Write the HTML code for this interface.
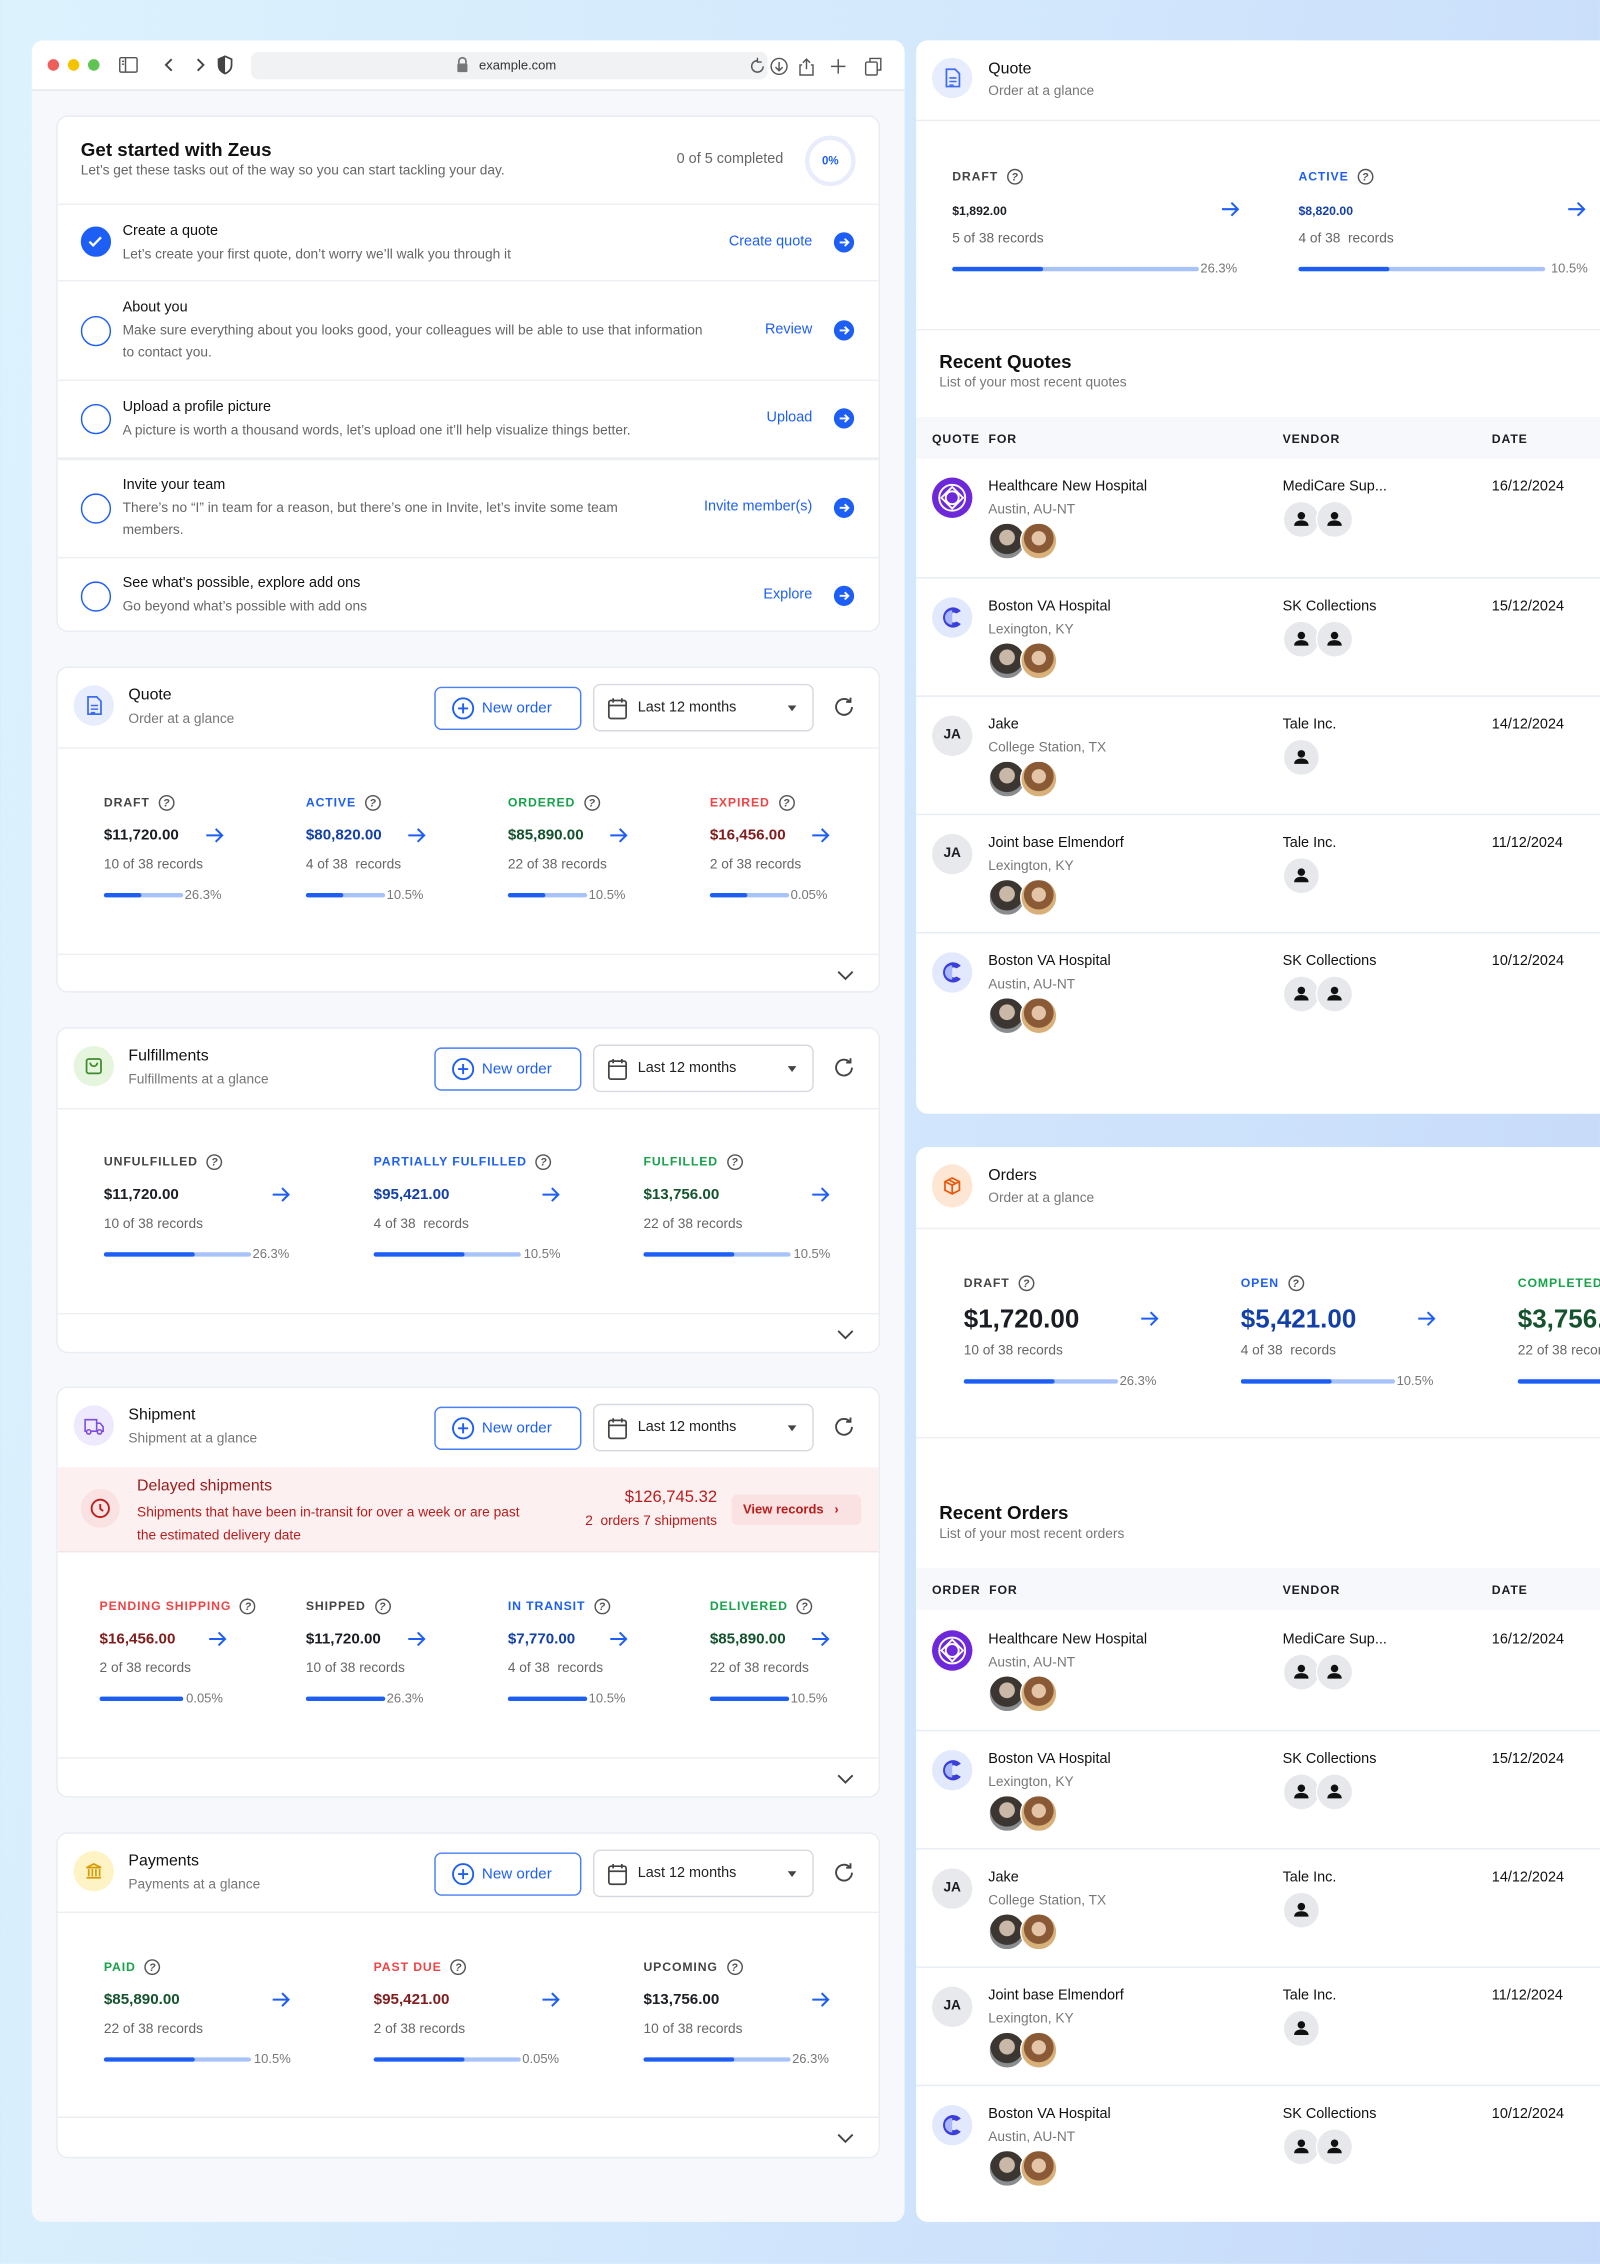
<!DOCTYPE html>
<html><head><meta charset="utf-8">
<style>
*{box-sizing:border-box;margin:0;padding:0}
html,body{width:1600px;height:2263px;overflow:hidden}
body{font-family:"Liberation Sans",sans-serif;color:#1a1d24;background:linear-gradient(100deg,#dcf2fd 0%,#d3e8fc 50%,#c5d9fa 100%)}
#c{position:absolute;left:0;top:0;width:1109px;height:1569px;transform:scale(1.44274);transform-origin:0 0}
.a{position:absolute}
.win{position:absolute;left:22px;top:28px;width:605px;height:1512px;background:#f6f8fb;border-radius:8px;overflow:hidden}
.bar{position:absolute;left:0;top:0;width:605px;height:35px;background:#fff;border-bottom:1px solid #e3e5ea}
.card{position:absolute;left:39px;width:571px;background:#fff;border:1px solid #e8ecf3;border-radius:8px}
.t{font-size:13px;font-weight:700;color:#111}
.s{font-size:9.5px;color:#666}
.line{position:absolute;left:0;right:0;height:1px;background:#eceef2}
.row .h{position:absolute;left:45px;font-size:10px;color:#111}
.row .d{position:absolute;left:45px;font-size:9.5px;color:#666;line-height:15px}
.chk{position:absolute;left:16px;width:21px;height:21px;border:1.6px solid #1d5ff5;border-radius:50%}
.lnk{position:absolute;right:46px;font-size:10px;color:#1d5ff5}
.go{position:absolute;right:17px;width:14px;height:14px;border-radius:50%;background:#1d5ff5}
.ic{position:absolute;left:11px;top:12px;width:28px;height:28px;border-radius:50%}
.ct{position:absolute;left:49px;top:13px;font-size:11px;color:#111}
.cs{position:absolute;left:49px;top:30px;font-size:9.5px;color:#777}
.nb{position:absolute;left:261px;top:13px;width:102px;height:30px;border:1px solid #4a7ef7;border-radius:5px;color:#1d5ff5;font-size:10.5px;line-height:28px;padding-left:32px}
.dd{position:absolute;left:371px;top:11px;width:153px;height:33px;border:1px solid #d6d9df;border-radius:5px;font-size:10px;line-height:31px;padding-left:30px;color:#222}
.st{position:absolute}
.st>*{position:absolute;white-space:nowrap}
.lab{top:0;font-size:8.5px;line-height:11px;letter-spacing:.6px;font-weight:700}
.q{display:inline-block;width:11px;height:11px;border:1.2px solid #555;border-radius:50%;font-size:7.5px;line-height:9px;text-align:center;color:#555;margin-left:6px;vertical-align:top;font-weight:700;letter-spacing:0}
.val{top:22px;font-size:10.5px;font-weight:700;line-height:12px}
.rec{top:43px;font-size:9.5px;color:#666;line-height:12px}
.pb{top:68px;height:3px;background:#a8c3fa;border-radius:2px}
.pb i{display:block;height:3px;background:#1d5ff5;border-radius:2px}
.pct{top:63px;font-size:9px;color:#777;line-height:12px}
.arr{top:22px}
.panel{position:absolute;left:635px;width:480px;background:#fff;border-radius:8px 0 0 8px}
.th{position:absolute;left:0;right:0;height:29px;background:#f6f8fb;font-size:8.5px;font-weight:700;letter-spacing:.6px}
.th span{position:absolute;top:10px}
.tr{position:absolute;left:0;right:0;height:82px;border-top:1px solid #e6ecf5}
.tr>*{position:absolute}
.lg{left:11px;top:13px;width:28px;height:28px;border-radius:50%}
.nm{left:50px;top:14px;font-size:10px;color:#111}
.lc{left:50px;top:30px;font-size:9.5px;color:#777}
.ph{top:44px;width:26px;height:26px;border-radius:50%;border:1.5px solid #fff}
.vn{left:254px;top:14px;font-size:10px;color:#111}
.dt{left:399px;top:14px;font-size:10px;color:#111}
.va{top:29px;width:26px;height:26px;border-radius:50%;background:#e6e8ec;border:1px solid #fff}
</style></head><body><div id="c">

<div class="win">
 <div class="bar">
  <div class="a" style="left:11px;top:13px;width:8px;height:8px;border-radius:50%;background:#ee5f5b"></div>
  <div class="a" style="left:25px;top:13px;width:8px;height:8px;border-radius:50%;background:#f5c400"></div>
  <div class="a" style="left:39px;top:13px;width:8px;height:8px;border-radius:50%;background:#5fc454"></div>
  <svg class="a" style="left:60px;top:10px" width="14" height="14" viewBox="0 0 14 14" fill="none" stroke="#555" stroke-width="1"><rect x="1" y="2" width="12" height="10" rx="1"/><path d="M5 2v10M2.5 4.5h1.5M2.5 6.5h1.5"/></svg>
  <svg class="a" style="left:90px;top:11px" width="40" height="12" viewBox="0 0 40 12" fill="none" stroke="#444" stroke-width="1.3"><path d="M7 2L3 6l4 4M25 2l4 4-4 4"/></svg>
  <svg class="a" style="left:128px;top:10px" width="12" height="14" viewBox="0 0 12 14"><path d="M6 1L1.5 3v4c0 3 2 5 4.5 6 2.5-1 4.5-3 4.5-6V3z" fill="none" stroke="#444" stroke-width="1.2"/><path d="M6 1v12c-2.5-1-4.5-3-4.5-6V3z" fill="#444"/></svg>
  <div class="a" style="left:152px;top:8px;width:358px;height:19px;background:#f1f2f4;border-radius:5px"></div>
  <svg class="a" style="left:294px;top:11px" width="9" height="12" viewBox="0 0 9 12"><path d="M2 5V3.5a2.5 2.5 0 015 0V5" fill="none" stroke="#777" stroke-width="1.2"/><rect x="1" y="5" width="7" height="6" rx="1" fill="#777"/></svg>
  <div class="a" style="left:310px;top:12px;font-size:9px;color:#333">example.com</div>
  <svg class="a" style="left:497px;top:11px" width="100" height="14" viewBox="0 0 100 14" fill="none" stroke="#555" stroke-width="1"><path d="M6 3a4 4 0 104 4M6 1v3h3"/><circle cx="21" cy="7" r="5.5"/><path d="M21 4v6M18.5 7.5L21 10l2.5-2.5"/><path d="M40 2v7M37.5 4.5L40 2l2.5 2.5M37 6h-1.5v7h9V6H43"/><path d="M62 2v10M57 7h10"/><rect x="81" y="4" width="8" height="9" rx="1"/><path d="M84 4V1.5h7.5v8H89"/></svg>
 </div>
</div>

<!-- Get started -->
<div class="card" style="top:80px;height:358px">
 <div class="a t" style="left:16px;top:15px">Get started with Zeus</div>
 <div class="a s" style="left:16px;top:32px">Let’s get these tasks out of the way so you can start tackling your day.</div>
 <div class="a s" style="left:429px;top:24px;font-size:10px">0 of 5 completed</div>
 <div class="a" style="left:518px;top:13px;width:35px;height:35px;border-radius:50%;border:3px solid #e9edfb;font-size:8px;color:#1d5ff5;text-align:center;line-height:29px;font-weight:700">0%</div>
 <div class="line" style="top:60px"></div>
 <div class="row">
  <div class="chk" style="top:76px;background:#1d5ff5"><svg width="18" height="18" viewBox="0 0 18 18" style="position:absolute;left:0;top:0"><path d="M5 9.5l2.6 2.6L13 6.5" fill="none" stroke="#fff" stroke-width="1.6"/></svg></div>
  <div class="h" style="top:74px">Create a quote</div><div class="d" style="top:88px">Let’s create your first quote, don’t worry we’ll walk you through it</div>
  <div class="lnk" style="top:81px">Create quote</div><div class="go" style="top:80px"><svg width="14" height="14" viewBox="0 0 14 14"><path d="M4 7h6M7.5 4.5L10 7l-2.5 2.5" fill="none" stroke="#fff" stroke-width="1.3"/></svg></div>
 </div>
 <div class="line" style="top:113px"></div>
 <div class="row">
  <div class="chk" style="top:138px"></div>
  <div class="h" style="top:127px">About you</div><div class="d" style="top:141px">Make sure everything about you looks good, your colleagues will be able to use that information<br>to contact you.</div>
  <div class="lnk" style="top:142px">Review</div><div class="go" style="top:141px"><svg width="14" height="14" viewBox="0 0 14 14"><path d="M4 7h6M7.5 4.5L10 7l-2.5 2.5" fill="none" stroke="#fff" stroke-width="1.3"/></svg></div>
 </div>
 <div class="line" style="top:182px"></div>
 <div class="row">
  <div class="chk" style="top:199px"></div>
  <div class="h" style="top:196px">Upload a profile picture</div><div class="d" style="top:210px">A picture is worth a thousand words, let’s upload one it’ll help visualize things better.</div>
  <div class="lnk" style="top:203px">Upload</div><div class="go" style="top:202px"><svg width="14" height="14" viewBox="0 0 14 14"><path d="M4 7h6M7.5 4.5L10 7l-2.5 2.5" fill="none" stroke="#fff" stroke-width="1.3"/></svg></div>
 </div>
 <div class="line" style="top:236px;height:2px"></div>
 <div class="row">
  <div class="chk" style="top:261px"></div>
  <div class="h" style="top:250px">Invite your team</div><div class="d" style="top:264px">There’s no “I” in team for a reason, but there’s one in Invite, let’s invite some team<br>members.</div>
  <div class="lnk" style="top:265px">Invite member(s)</div><div class="go" style="top:264px"><svg width="14" height="14" viewBox="0 0 14 14"><path d="M4 7h6M7.5 4.5L10 7l-2.5 2.5" fill="none" stroke="#fff" stroke-width="1.3"/></svg></div>
 </div>
 <div class="line" style="top:305px"></div>
 <div class="row">
  <div class="chk" style="top:322px"></div>
  <div class="h" style="top:318px">See what's possible, explore add ons</div><div class="d" style="top:332px">Go beyond what’s possible with add ons</div>
  <div class="lnk" style="top:326px">Explore</div><div class="go" style="top:325px"><svg width="14" height="14" viewBox="0 0 14 14"><path d="M4 7h6M7.5 4.5L10 7l-2.5 2.5" fill="none" stroke="#fff" stroke-width="1.3"/></svg></div>
 </div>
</div>

<svg width="0" height="0" style="position:absolute"><defs>
<symbol id="ar" viewBox="0 0 14 12"><path d="M1 6h11M7.5 1.5L12 6l-4.5 4.5" fill="none" stroke="#1d5ff5" stroke-width="1.4"/></symbol>
<symbol id="plus" viewBox="0 0 16 16"><circle cx="8" cy="8" r="7" fill="none" stroke="#1d5ff5" stroke-width="1.3"/><path d="M8 4.5v7M4.5 8h7" stroke="#1d5ff5" stroke-width="1.3"/></symbol>
<symbol id="cal" viewBox="0 0 14 16"><rect x="1" y="2.5" width="12" height="12.5" rx="1.5" fill="none" stroke="#444" stroke-width="1.2"/><path d="M1 6h12M4 1v3M10 1v3" stroke="#444" stroke-width="1.2"/></symbol>
<symbol id="ref" viewBox="0 0 16 16"><path d="M13.5 8a5.5 5.5 0 11-1.6-3.9M12.5 1.5v3h-3" fill="none" stroke="#444" stroke-width="1.3"/></symbol>
<symbol id="chev" viewBox="0 0 12 8"><path d="M1 1.5l5 5 5-5" fill="none" stroke="#444" stroke-width="1.3"/></symbol>
</defs></svg>

<!-- Quote card -->
<div class="card" style="top:462px;height:226px">
 <div class="ic" style="background:#e8edfd"><svg width="28" height="28" viewBox="0 0 28 28"><path d="M10 8h6l3 3v9H10z" fill="none" stroke="#3d6cf0" stroke-width="1.2"/><path d="M12 14h5M12 16.5h5M12 19h3" stroke="#3d6cf0" stroke-width="1.1"/></svg></div>
 <div class="ct">Quote</div><div class="cs">Order at a glance</div>
 <div class="nb"><svg class="a" style="left:11px;top:6px" width="16" height="16"><use href="#plus"/></svg>New order</div>
 <div class="dd"><svg class="a" style="left:9px;top:8px" width="14" height="16"><use href="#cal"/></svg>Last 12 months<span class="a" style="right:11px;top:14px;border:3.5px solid transparent;border-top:4px solid #444"></span></div>
 <svg class="a" style="left:537px;top:19px" width="16" height="16"><use href="#ref"/></svg>
 <div class="line" style="top:55px"></div>
 <div class="line" style="top:198px"></div>
 <svg class="a" style="left:540px;top:209px" width="12" height="8"><use href="#chev"/></svg>
</div>
<div class="st" style="left:72px;top:551px"><div class="lab" style="color:#444">DRAFT<i class="q">?</i></div><div class="val">$11,720.00</div><svg class="arr" style="left:70px" width="14" height="12"><use href="#ar"/></svg><div class="rec">10 of 38 records</div><div class="pb" style="width:55px"><i style="width:26px"></i></div><div class="pct" style="left:56px">26.3%</div></div>
<div class="st" style="left:212px;top:551px"><div class="lab" style="color:#1d5ff5">ACTIVE<i class="q">?</i></div><div class="val" style="color:#123fa8">$80,820.00</div><svg class="arr" style="left:70px" width="14" height="12"><use href="#ar"/></svg><div class="rec">4 of 38&nbsp; records</div><div class="pb" style="width:55px"><i style="width:26px"></i></div><div class="pct" style="left:56px">10.5%</div></div>
<div class="st" style="left:352px;top:551px"><div class="lab" style="color:#16a34a">ORDERED<i class="q">?</i></div><div class="val" style="color:#14532d">$85,890.00</div><svg class="arr" style="left:70px" width="14" height="12"><use href="#ar"/></svg><div class="rec">22 of 38 records</div><div class="pb" style="width:55px"><i style="width:26px"></i></div><div class="pct" style="left:56px">10.5%</div></div>
<div class="st" style="left:492px;top:551px"><div class="lab" style="color:#ef4444">EXPIRED<i class="q">?</i></div><div class="val" style="color:#7f1d1d">$16,456.00</div><svg class="arr" style="left:70px" width="14" height="12"><use href="#ar"/></svg><div class="rec">2 of 38 records</div><div class="pb" style="width:55px"><i style="width:26px"></i></div><div class="pct" style="left:56px">0.05%</div></div>

<!-- Fulfillments -->
<div class="card" style="top:712px;height:226px">
 <div class="ic" style="background:#e6f5de"><svg width="28" height="28" viewBox="0 0 28 28"><rect x="9" y="9" width="10" height="10" rx="1.5" fill="none" stroke="#3f8a2a" stroke-width="1.2"/><path d="M11.5 11.5a2.5 2.5 0 005 0" fill="none" stroke="#3f8a2a" stroke-width="1.2"/></svg></div>
 <div class="ct">Fulfillments</div><div class="cs">Fulfillments at a glance</div>
 <div class="nb"><svg class="a" style="left:11px;top:6px" width="16" height="16"><use href="#plus"/></svg>New order</div>
 <div class="dd"><svg class="a" style="left:9px;top:8px" width="14" height="16"><use href="#cal"/></svg>Last 12 months<span class="a" style="right:11px;top:14px;border:3.5px solid transparent;border-top:4px solid #444"></span></div>
 <svg class="a" style="left:537px;top:19px" width="16" height="16"><use href="#ref"/></svg>
 <div class="line" style="top:55px"></div>
 <div class="line" style="top:197px"></div>
 <svg class="a" style="left:540px;top:208px" width="12" height="8"><use href="#chev"/></svg>
</div>
<div class="st" style="left:72px;top:800px"><div class="lab" style="color:#444">UNFULFILLED<i class="q">?</i></div><div class="val">$11,720.00</div><svg class="arr" style="left:116px" width="14" height="12"><use href="#ar"/></svg><div class="rec">10 of 38 records</div><div class="pb" style="width:102px"><i style="width:63px"></i></div><div class="pct" style="left:103px">26.3%</div></div>
<div class="st" style="left:259px;top:800px"><div class="lab" style="color:#1d5ff5">PARTIALLY FULFILLED<i class="q">?</i></div><div class="val" style="color:#123fa8">$95,421.00</div><svg class="arr" style="left:116px" width="14" height="12"><use href="#ar"/></svg><div class="rec">4 of 38&nbsp; records</div><div class="pb" style="width:102px"><i style="width:63px"></i></div><div class="pct" style="left:104px">10.5%</div></div>
<div class="st" style="left:446px;top:800px"><div class="lab" style="color:#16a34a">FULFILLED<i class="q">?</i></div><div class="val" style="color:#14532d">$13,756.00</div><svg class="arr" style="left:116px" width="14" height="12"><use href="#ar"/></svg><div class="rec">22 of 38 records</div><div class="pb" style="width:102px"><i style="width:63px"></i></div><div class="pct" style="left:104px">10.5%</div></div>

<!-- Shipment -->
<div class="card" style="top:961px;height:285px">
 <div class="ic" style="background:#efe9fd"><svg width="28" height="28" viewBox="0 0 28 28" fill="none" stroke="#7c4de0" stroke-width="1.1"><path d="M8 10h8v8H8zM16 12.5h2.5l2 2.5v3H16"/><circle cx="10.5" cy="18.5" r="1.5" fill="#efe9fd"/><circle cx="18" cy="18.5" r="1.5" fill="#efe9fd"/></svg></div>
 <div class="ct">Shipment</div><div class="cs">Shipment at a glance</div>
 <div class="nb"><svg class="a" style="left:11px;top:6px" width="16" height="16"><use href="#plus"/></svg>New order</div>
 <div class="dd"><svg class="a" style="left:9px;top:8px" width="14" height="16"><use href="#cal"/></svg>Last 12 months<span class="a" style="right:11px;top:14px;border:3.5px solid transparent;border-top:4px solid #444"></span></div>
 <svg class="a" style="left:537px;top:19px" width="16" height="16"><use href="#ref"/></svg>
 <div class="a" style="left:0;right:0;top:55px;height:59px;background:#fdf0f0;border-bottom:1px solid #f4e4e4"></div>
 <div class="a" style="left:16px;top:70px;width:27px;height:27px;border-radius:50%;background:#fbe2e2"><svg width="27" height="27" viewBox="0 0 27 27"><circle cx="13.5" cy="13.5" r="6" fill="none" stroke="#b91c1c" stroke-width="1.3"/><path d="M13.5 10.5v3.3l2 1.5" fill="none" stroke="#b91c1c" stroke-width="1.3"/></svg></div>
 <div class="a" style="left:55px;top:62px;font-size:11px;color:#991b1b">Delayed shipments</div>
 <div class="a" style="left:55px;top:79px;font-size:9.5px;color:#b91c1c;line-height:16px">Shipments that have been in-transit for over a week or are past<br>the estimated delivery date</div>
 <div class="a" style="right:112px;top:70px;font-size:11.5px;color:#b91c1c">$126,745.32</div>
 <div class="a" style="right:112px;top:87px;font-size:9.5px;color:#b91c1c">2&nbsp; orders 7 shipments</div>
 <div class="a" style="left:467px;top:74px;width:90px;height:21px;background:#fbe2e2;border-radius:4px;font-size:9px;color:#b91c1c;font-weight:700;line-height:21px;padding-left:8px">View records&nbsp;&nbsp; ›</div>
 <div class="line" style="top:256px"></div>
 <svg class="a" style="left:540px;top:267px" width="12" height="8"><use href="#chev"/></svg>
</div>
<div class="st" style="left:69px;top:1108px"><div class="lab" style="color:#ef4444">PENDING SHIPPING<i class="q">?</i></div><div class="val" style="color:#7f1d1d">$16,456.00</div><svg class="arr" style="left:75px" width="14" height="12"><use href="#ar"/></svg><div class="rec">2 of 38 records</div><div class="pb" style="width:58px"><i style="width:58px"></i></div><div class="pct" style="left:60px">0.05%</div></div>
<div class="st" style="left:212px;top:1108px"><div class="lab" style="color:#444">SHIPPED<i class="q">?</i></div><div class="val">$11,720.00</div><svg class="arr" style="left:70px" width="14" height="12"><use href="#ar"/></svg><div class="rec">10 of 38 records</div><div class="pb" style="width:55px"><i style="width:55px"></i></div><div class="pct" style="left:56px">26.3%</div></div>
<div class="st" style="left:352px;top:1108px"><div class="lab" style="color:#1d5ff5">IN TRANSIT<i class="q">?</i></div><div class="val" style="color:#123fa8">$7,770.00</div><svg class="arr" style="left:70px" width="14" height="12"><use href="#ar"/></svg><div class="rec">4 of 38&nbsp; records</div><div class="pb" style="width:55px"><i style="width:55px"></i></div><div class="pct" style="left:56px">10.5%</div></div>
<div class="st" style="left:492px;top:1108px"><div class="lab" style="color:#16a34a">DELIVERED<i class="q">?</i></div><div class="val" style="color:#14532d">$85,890.00</div><svg class="arr" style="left:70px" width="14" height="12"><use href="#ar"/></svg><div class="rec">22 of 38 records</div><div class="pb" style="width:55px"><i style="width:55px"></i></div><div class="pct" style="left:56px">10.5%</div></div>

<!-- Payments -->
<div class="card" style="top:1270px;height:226px">
 <div class="ic" style="background:#fdf3c4"><svg width="28" height="28" viewBox="0 0 28 28" fill="none" stroke="#d99a00" stroke-width="1.2"><path d="M9 11.5L14 9l5 2.5zM10.5 12.5v5M13 12.5v5M15.5 12.5v5M18 12.5v5M9 18.5h10"/></svg></div>
 <div class="ct">Payments</div><div class="cs">Payments at a glance</div>
 <div class="nb"><svg class="a" style="left:11px;top:6px" width="16" height="16"><use href="#plus"/></svg>New order</div>
 <div class="dd"><svg class="a" style="left:9px;top:8px" width="14" height="16"><use href="#cal"/></svg>Last 12 months<span class="a" style="right:11px;top:14px;border:3.5px solid transparent;border-top:4px solid #444"></span></div>
 <svg class="a" style="left:537px;top:19px" width="16" height="16"><use href="#ref"/></svg>
 <div class="line" style="top:54px"></div>
 <div class="line" style="top:196px"></div>
 <svg class="a" style="left:540px;top:207px" width="12" height="8"><use href="#chev"/></svg>
</div>
<div class="st" style="left:72px;top:1358px"><div class="lab" style="color:#16a34a">PAID<i class="q">?</i></div><div class="val" style="color:#14532d">$85,890.00</div><svg class="arr" style="left:116px" width="14" height="12"><use href="#ar"/></svg><div class="rec">22 of 38 records</div><div class="pb" style="width:102px"><i style="width:63px"></i></div><div class="pct" style="left:104px">10.5%</div></div>
<div class="st" style="left:259px;top:1358px"><div class="lab" style="color:#ef4444">PAST DUE<i class="q">?</i></div><div class="val" style="color:#7f1d1d">$95,421.00</div><svg class="arr" style="left:116px" width="14" height="12"><use href="#ar"/></svg><div class="rec">2 of 38 records</div><div class="pb" style="width:102px"><i style="width:63px"></i></div><div class="pct" style="left:103px">0.05%</div></div>
<div class="st" style="left:446px;top:1358px"><div class="lab" style="color:#444">UPCOMING<i class="q">?</i></div><div class="val">$13,756.00</div><svg class="arr" style="left:116px" width="14" height="12"><use href="#ar"/></svg><div class="rec">10 of 38 records</div><div class="pb" style="width:102px"><i style="width:63px"></i></div><div class="pct" style="left:103px">26.3%</div></div>

<!-- Right quote panel -->
<div class="panel" style="top:28px;height:744px">
 <div class="a" style="left:11px;top:12px;width:28px;height:28px;border-radius:50%;background:#e8edfd"><svg width="28" height="28" viewBox="0 0 28 28"><path d="M10 8h6l3 3v9H10z" fill="none" stroke="#3d6cf0" stroke-width="1.2"/><path d="M12 14h5M12 16.5h5M12 19h3" stroke="#3d6cf0" stroke-width="1.1"/></svg></div>
 <div class="a" style="left:50px;top:14px;font-size:11px;color:#111">Quote</div>
 <div class="a" style="left:50px;top:30px;font-size:9.5px;color:#777">Order at a glance</div>
 <div class="line" style="top:55px"></div>
 <div class="line" style="top:200px"></div>
 <div class="a" style="left:16px;top:215px;font-size:13px;font-weight:700;color:#111">Recent Quotes</div>
 <div class="a" style="left:16px;top:232px;font-size:9.5px;color:#777">List of your most recent quotes</div>
 <div class="th" style="top:261px"><span style="left:11px">QUOTE&nbsp; FOR</span><span style="left:254px">VENDOR</span><span style="left:399px">DATE</span></div>
</div>
<div class="st" style="left:660px;top:117px"><div class="lab" style="color:#444">DRAFT<i class="q">?</i></div><div class="val" style="font-size:8.5px;top:23px">$1,892.00</div><svg class="arr" style="left:186px" width="14" height="12"><use href="#ar"/></svg><div class="rec">5 of 38 records</div><div class="pb" style="width:171px"><i style="width:63px"></i></div><div class="pct" style="left:172px">26.3%</div></div>
<div class="st" style="left:900px;top:117px"><div class="lab" style="color:#1d5ff5">ACTIVE<i class="q">?</i></div><div class="val" style="font-size:8.5px;top:23px;color:#123fa8">$8,820.00</div><svg class="arr" style="left:186px" width="14" height="12"><use href="#ar"/></svg><div class="rec">4 of 38&nbsp; records</div><div class="pb" style="width:171px"><i style="width:63px"></i></div><div class="pct" style="left:175px">10.5%</div></div>

<!-- Right orders panel -->
<div class="panel" style="top:795px;height:745px">
 <div class="a" style="left:11px;top:12px;width:28px;height:30px;border-radius:50%;background:#fde6d4"><svg width="28" height="30" viewBox="0 0 28 30" fill="none" stroke="#ea580c" stroke-width="1.2"><path d="M14 9.5l5 2.5v6l-5 2.5-5-2.5v-6zM9 12l5 2.5 5-2.5M14 14.5v6M11.5 10.7l5 2.6"/></svg></div>
 <div class="a" style="left:50px;top:14px;font-size:11px;color:#111">Orders</div>
 <div class="a" style="left:50px;top:30px;font-size:9.5px;color:#777">Order at a glance</div>
 <div class="line" style="top:56px"></div>
 <div class="line" style="top:201px"></div>
 <div class="a" style="left:16px;top:246px;font-size:13px;font-weight:700;color:#111">Recent Orders</div>
 <div class="a" style="left:16px;top:263px;font-size:9.5px;color:#777">List of your most recent orders</div>
 <div class="th" style="top:292px"><span style="left:11px">ORDER&nbsp; FOR</span><span style="left:254px">VENDOR</span><span style="left:399px">DATE</span></div>
</div>
<div class="st" style="left:668px;top:884px"><div class="lab" style="color:#444">DRAFT<i class="q">?</i></div><div class="val" style="font-size:18px;line-height:22px;top:19px">$1,720.00</div><svg class="arr" style="left:122px;top:24px" width="14" height="12"><use href="#ar"/></svg><div class="rec" style="top:47px">10 of 38 records</div><div class="pb" style="width:107px;top:72px"><i style="width:63px"></i></div><div class="pct" style="left:108px;top:67px">26.3%</div></div>
<div class="st" style="left:860px;top:884px"><div class="lab" style="color:#1d5ff5">OPEN<i class="q">?</i></div><div class="val" style="font-size:18px;line-height:22px;top:19px;color:#123fa8">$5,421.00</div><svg class="arr" style="left:122px;top:24px" width="14" height="12"><use href="#ar"/></svg><div class="rec" style="top:47px">4 of 38&nbsp; records</div><div class="pb" style="width:107px;top:72px"><i style="width:63px"></i></div><div class="pct" style="left:108px;top:67px">10.5%</div></div>
<div class="st" style="left:1052px;top:884px"><div class="lab" style="color:#16a34a">COMPLETED</div><div class="val" style="font-size:18px;line-height:22px;top:19px;color:#14532d">$3,756.00</div><div class="rec" style="top:47px">22 of 38 records</div><div class="pb" style="width:107px;top:72px"><i style="width:63px"></i></div></div>

<div id="rows"></div>
</div>
<script>
var data=[["h","Healthcare New Hospital","Austin, AU-NT","MediCare Sup...","16/12/2024",2],["c","Boston VA Hospital","Lexington, KY","SK Collections","15/12/2024",2],["j","Jake","College Station, TX","Tale Inc.","14/12/2024",1],["j","Joint base Elmendorf","Lexington, KY","Tale Inc.","11/12/2024",1],["c","Boston VA Hospital","Austin, AU-NT","SK Collections","10/12/2024",2]];
function logo(t){
 if(t=="h")return '<div class="lg" style="background:#6d28d9"><svg width="28" height="28" viewBox="0 0 28 28" fill="none" stroke="#fff" stroke-width="1.3"><circle cx="14" cy="14" r="9"/><path d="M14 6.5L21.5 14 14 21.5 6.5 14z"/><circle cx="14" cy="14" r="4.5"/></svg></div>';
 if(t=="c")return '<div class="lg" style="background:#e3e9fd"><svg width="28" height="28" viewBox="0 0 28 28"><path d="M20 9.5A7 7 0 1020 18.5l-3-1.7a3.5 3.5 0 110-5.6z" fill="#3b3fd8"/><path d="M9 14a5 5 0 015-5v10a5 5 0 01-5-5z" fill="#a8b8fb"/></svg></div>';
 return '<div class="lg" style="background:#e8e9ec;font-size:9.5px;font-weight:700;text-align:center;line-height:28px">JA</div>';
}
var per='<svg width="24" height="24" viewBox="0 0 24 24" style="position:absolute;left:0;top:0"><circle cx="12" cy="9.5" r="2.6" fill="#111"/><path d="M7 16.5c0-2.6 2.2-3.8 5-3.8s5 1.2 5 3.8z" fill="#111"/></svg>';
function rows(top,n){var h='';for(var i=0;i<n;i++){var d=data[i],y=top+i*82;
 h+='<div class="tr" style="top:'+y+'px;left:635px;width:480px;'+(i==0?'border-top:none':'')+'">'+logo(d[0])+'<div class="nm">'+d[1]+'</div><div class="lc">'+d[2]+'</div>'+
 '<div class="ph" style="left:50px;background:radial-gradient(circle at 50% 40%,#c9b8a8 0 28%,#3b3631 30% 60%,#8a8d90 62%)"></div><div class="ph" style="left:72px;background:radial-gradient(circle at 50% 42%,#e4c4a6 0 26%,#8a5a36 28% 55%,#d8b07a 57%)"></div>'+
 '<div class="vn">'+d[3]+'</div>';
 for(var k=0;k<d[5];k++)h+='<div class="va" style="left:'+(254+k*23)+'px">'+per+'</div>';
 h+='<div class="dt">'+d[4]+'</div></div>';}
 return h;}
document.getElementById('rows').innerHTML=rows(318,5)+rows(1117,5);
</script>
</body></html>
